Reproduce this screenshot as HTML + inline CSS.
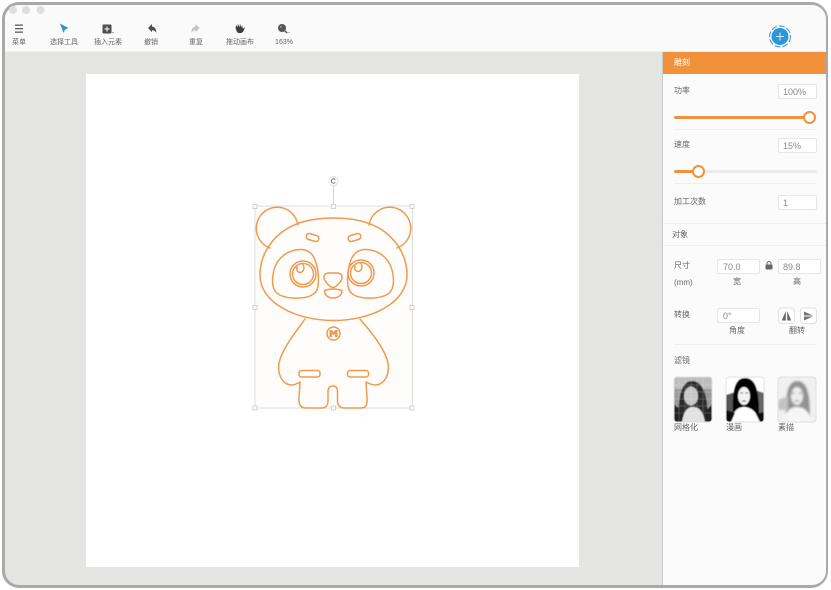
<!DOCTYPE html>
<html><head><meta charset="utf-8"><style>
*{box-sizing:border-box;margin:0;padding:0}
html,body{width:831px;height:590px;overflow:hidden;background:#fff}
body{font-family:"Liberation Sans","Noto Sans CJK SC",sans-serif;color:#555;position:relative}
#app{position:absolute;left:2px;top:2px;width:826px;height:586px;border:3px solid #a9a9a8;border-radius:17px;overflow:hidden;background:#e4e4e2}
.a{position:absolute}
.t{position:absolute;font-size:7px;line-height:10px;white-space:nowrap;text-align:center;color:#666;filter:blur(.3px)}
.l{position:absolute;font-size:8px;line-height:12px;white-space:nowrap;color:#666;filter:blur(.25px)}
.m{font-size:8px}
.in{position:absolute;background:#fff;border:1px solid #e6e6e6;border-radius:2px;height:15px;font-size:9px;line-height:14px;padding-left:4px;color:#888;filter:blur(.15px)}
.hr{position:absolute;height:1px;background:#efefef}
</style></head><body>
<div id="app"></div>
<svg class="a" style="left:0;top:0" width="831" height="590" viewBox="0 0 831 590">
<defs>
<clipPath id="fr"><rect x="5" y="5" width="821" height="580" rx="14"/></clipPath>
<clipPath id="c1"><rect x="674" y="377" width="38" height="45" rx="3"/></clipPath>
<clipPath id="c2"><rect x="726" y="377" width="38" height="45" rx="3"/></clipPath>
<clipPath id="c3"><rect x="778" y="377" width="38" height="45" rx="3"/></clipPath>
<filter id="b0"><feGaussianBlur stdDeviation=".25"/></filter>
<filter id="b1"><feGaussianBlur stdDeviation=".6"/></filter>
<filter id="b2"><feGaussianBlur stdDeviation="1"/></filter>
</defs>
<g clip-path="url(#fr)">
<rect x="0" y="0" width="831" height="52" fill="#fafafa"/>
<rect x="0" y="51.500" width="831" height="1" fill="#e8e8e8"/>
<rect x="86" y="74" width="493" height="493" fill="#fff"/>
<rect x="662" y="52" width="170" height="540" fill="#fbfbfb"/>
<rect x="662" y="52" width="1" height="540" fill="#c9c9c9"/>
<rect x="663" y="52" width="164" height="22" fill="#f2913c"/>
</g>
<!-- traffic -->
<circle cx="13" cy="10" r="4" fill="#dedede"/><circle cx="26" cy="10" r="4" fill="#dedede"/><circle cx="40.500" cy="10" r="4" fill="#dedede"/>
<!-- toolbar icons -->
<g fill="#5a5a5a" filter="url(#b0)">
<rect x="15" y="24.500" width="8" height="1.300"/><rect x="15" y="28" width="8" height="1.300"/><rect x="15" y="31.500" width="8" height="1.300"/>
<path d="M60 23.500 L68.500 28 L65 29.800 L63.500 33 Z" fill="#2e95d8"/>
<rect x="102.500" y="24.500" width="9" height="9" rx="1" fill="#4f4f4f"/>
<path d="M104.500 28.500h5v1h-5zM106.500 26.500h1v5h-1z" fill="#fff"/>
<circle cx="113" cy="32.500" r=".6"/>
<path d="M148 28 L152 24 V26.500 C154.800 26.800 156.300 29 156.300 32.800 C155.300 31 153.800 30.300 152 30.300 V32.300 Z" fill="#4f4f4f"/>
<path d="M199.500 28 L195.500 24 V26.500 C192.700 26.800 191.500 29 191.500 32.800 C192.500 31 193.800 30.300 195.500 30.300 V32.300 Z" fill="#c2c2c2"/>
<path d="M235.500 27.800 L236.500 25 L237.600 27.500 L237.900 23.800 L239.400 27.300 L240 23.800 L241.200 27.500 L242 25 L242.800 28.600 L245 27 L243.500 31 C242.500 33.600 237.500 33.800 236.800 31.500 Z" fill="#3e3e3e"/>
<circle cx="282" cy="28" r="4" fill="#555"/><circle cx="281" cy="27" r="1.200" fill="#8a8a8a"/><path d="M284.500 30.500l2.700 2.500" stroke="#555" stroke-width="1.500"/><circle cx="289" cy="32.500" r=".5"/>
</g>
<!-- add button -->
<circle cx="780" cy="36.500" r="10.500" fill="none" stroke="#2e95d8" stroke-width="1" stroke-dasharray="6 2"/>
<circle cx="780" cy="36.500" r="8.500" fill="#2e95d8"/>
<path d="M776 36.500h8M780 32.500v8" stroke="#d5ecfa" stroke-width="1"/>
<!-- selection -->
<rect x="255" y="206" width="157.500" height="202" fill="#fefdfc" stroke="#dedede" stroke-width="1"/>
<path d="M333.500 206V186" stroke="#d4d4d4"/>
<circle cx="333.500" cy="181" r="4.500" fill="#fff" stroke="#ddd"/>
<path d="M335.300 179.700a2.200 2.200 0 1 0 0 2.600" fill="none" stroke="#555" stroke-width=".8"/>
<g fill="#fff" stroke="#c9c9c9" stroke-width=".8">
<rect x="253" y="204.500" width="4" height="4"/><rect x="331.500" y="204.500" width="4" height="4"/><rect x="410" y="204.500" width="4" height="4"/>
<rect x="253" y="305.500" width="4" height="4"/><rect x="410" y="305.500" width="4" height="4"/>
<rect x="253" y="406" width="4" height="4"/><rect x="331.500" y="406" width="4" height="4"/><rect x="410" y="406" width="4" height="4"/>
</g>
<!-- panda -->
<g fill="none" stroke="#ef9a4e" stroke-width="1.500" stroke-linejoin="round" stroke-linecap="round" filter="url(#b0)">
<path d="M298 225 A21 21 0 1 0 270 248"/>
<path d="M369 225 A21 21 0 1 1 397 248"/>
<path d="M333.500 218 C312 218 294 223 282 232 C268 243 260 258 260 275 C260 303 296 320.500 333.500 320.500 C371 320.500 407 303 407 275 C407 258 399 243 385 232 C373 223 355 218 333.500 218Z"/>
<rect x="306" y="234.500" width="13" height="6" rx="3" transform="rotate(17 312.500 237.500)"/>
<rect x="348" y="234.500" width="13" height="6" rx="3" transform="rotate(-17 354.500 237.500)"/>
<path d="M302 249.500 C288 249 277 258 274 270 C272 278 272 286 275 291 C279 297 290 298.500 298 298 C308 298 317 295 318 286 C319 278 318 268 315 260 C313 254 308 250 302 249.500Z"/>
<path d="M364 249.500 C378 249 389 258 392 270 C394 278 394 286 391 291 C387 297 376 298.500 368 298 C358 298 349 295 348 286 C347 278 348 268 351 260 C353 254 358 250 364 249.500Z"/>
<circle cx="303" cy="274" r="13"/><circle cx="303" cy="274" r="10.500"/>
<circle cx="361" cy="273" r="13"/><circle cx="361" cy="273" r="10.500"/>
<path d="M297 267 C296 272 300 274 303 271 C304.500 269 304 266 303 264.500"/>
<path d="M355 266 C354 271 358 273 361 270 C362.500 268 362 265 361 263.500"/>
<path d="M329 273 H337 C341.500 273 343 276.500 341.500 279.500 C339.500 283.500 335.500 287.500 333 287.500 C330.500 287.500 326.500 283.500 324.500 279.500 C323 276.500 324.500 273 329 273Z"/>
<path d="M324.500 290.500 C330 288.500 336 288.500 342 290.500 C342 295 338 298 333 298 C328 298 324.500 295 324.500 290.500Z"/>
<path d="M305 319 C295 333 282 349 279 363 C277 375 283 385 292 385 C295 385 298 383 300 382 L299 398 C298.500 405 301 408 306 408 L322 408 C326 408 328 405 328 401 L328 391 C328 388 330 386 333 386 C336 386 337.500 388 337.500 391 L337.500 401 C337.500 405 340 408 344 408 L361 408 C366 408 367.500 405 367 398 L366 382 C368 383 371 385 375 385 C384 385 390 375 388 363 C385 349 372 333 360 319"/>
<circle cx="333.500" cy="333.500" r="6.500"/>
<rect x="299" y="370.500" width="21" height="6.500" rx="2.500"/>
<rect x="347.500" y="370.500" width="21" height="6.500" rx="2.500"/>
</g>
<path d="M329.500 330h2.500l1.500 2 1.500-2h2.500v7h-2.500v-3l-1.500 1-1.500-1v3h-2.500z" fill="#ef9a4c"/>
<!-- sliders -->
<rect x="674" y="116" width="136" height="3" rx="1.500" fill="#f2913c"/>
<circle cx="809.500" cy="117.500" r="5.500" fill="#fff" stroke="#f2913c" stroke-width="2"/>
<rect x="674" y="170" width="143" height="3" rx="1.500" fill="#ececec"/>
<rect x="674" y="170" width="24" height="3" rx="1.500" fill="#f2913c"/>
<circle cx="698.500" cy="171.500" r="5.500" fill="#fff" stroke="#f2913c" stroke-width="2"/>
<!-- lock -->
<rect x="765.500" y="264.500" width="7" height="5" rx="1" fill="#666"/>
<path d="M767 265v-1.500a2 2 0 0 1 4 0V265" fill="none" stroke="#666" stroke-width="1"/>
<!-- flip -->
<rect x="778.500" y="308" width="16" height="15.500" rx="3" fill="#fff" stroke="#e0e0e0"/>
<rect x="800.500" y="308" width="16" height="15.500" rx="3" fill="#fff" stroke="#e0e0e0"/>
<path d="M785.800 311v9.500h-4zM787.200 311v9.500h4z" fill="#666"/>
<path d="M804 311.500l9 4h-9zM804 316.500h9l-9 4z" fill="#777"/>
<!-- thumbnails -->
<g clip-path="url(#c1)"><g filter="url(#b1)">
<rect x="674" y="377" width="38" height="45" fill="#9a9a9a"/>
<rect x="674" y="377" width="38" height="12" fill="#bdbdbd"/>
<path d="M678 422 C678 398 681 381 692 381 C704 381 708 398 708 422Z" fill="#2b2b2b"/>
<ellipse cx="691" cy="396" rx="7" ry="9.500" fill="#c6c6c6"/>
<path d="M682 422 C684 410 688 407 693 407 C699 407 703 411 705 422Z" fill="#e2e2e2"/>
<path d="M674 422V404L683 412 681 422ZM712 422V404L705 412 707 422Z" fill="#222"/>
<path d="M679 377v45M685 377v45M691 377v45M697 377v45M703 377v45M674 385h38M674 392h38M674 399h38M674 406h38M674 413h38" stroke="#fff" stroke-width=".7" opacity=".25"/>
</g></g>
<g clip-path="url(#c2)"><g filter="url(#b1)">
<rect x="726" y="377" width="38" height="45" fill="#fff"/>
<path d="M726 395 L738 391 L738 414 H726Z" fill="#555"/>
<path d="M764 393 L752 389 L752 414 H764Z" fill="#666"/>
<path d="M733 414 C732 393 734 378 745 378 C757 378 759 394 759 414Z" fill="#050505"/>
<ellipse cx="744" cy="396" rx="6" ry="9" fill="#f2f2f2"/>
<path d="M740.500 393h2.500M745.500 393h2.500M742 401h4" stroke="#222" stroke-width="1"/>
<path d="M730 422 C733 411 738 407 744 407 C751 407 757 412 760 422Z" fill="#fff"/>
<path d="M726 422V410L735 413 731 422ZM764 422V412L756 414 760 422Z" fill="#0a0a0a"/>
</g></g>
<rect x="726" y="377" width="38" height="45" rx="3" fill="none" stroke="#e2e2e2"/>
<g clip-path="url(#c3)"><g filter="url(#b2)">
<rect x="778" y="377" width="38" height="45" fill="#f0f0f0"/>
<path d="M786 416 C785 394 788 381 797 381 C808 381 810 396 810 416Z" fill="#929292"/>
<ellipse cx="797" cy="396" rx="6" ry="9" fill="#ececec"/>
<path d="M778 400 L788 396 V410 H778Z" fill="#c2c2c2"/>
<path d="M783 422 C786 410 791 407 797 407 C804 407 809 411 812 422Z" fill="#f6f6f6"/>
<path d="M791.500 393h3M799 393h3M795 401h4" stroke="#666" stroke-width="1"/>
</g></g>
<rect x="778" y="377" width="38" height="45" rx="3" fill="none" stroke="#dedede"/>
<rect x="674" y="377" width="38" height="45" rx="3" fill="none" stroke="#dcdcdc"/>
</svg>

<div class="t" style="left:4px;width:30px;top:38px">菜单</div>
<div class="t" style="left:44px;width:40px;top:38px">选择工具</div>
<div class="t" style="left:87px;width:42px;top:38px">插入元素</div>
<div class="t" style="left:136px;width:30px;top:38px">撤销</div>
<div class="t" style="left:181px;width:30px;top:38px">重复</div>
<div class="t" style="left:219px;width:42px;top:38px">拖动画布</div>
<div class="t" style="left:269px;width:30px;top:38px">163%</div>

<div class="l" style="left:674px;top:57px;color:#fff">雕刻</div>
<div class="l" style="left:674px;top:85px">功率</div>
<div class="in" style="left:778px;top:84px;width:39px">100%</div>
<div class="hr" style="left:674px;top:129px;width:143px"></div>
<div class="l" style="left:674px;top:139px">速度</div>
<div class="in" style="left:778px;top:138px;width:39px">15%</div>
<div class="hr" style="left:674px;top:183px;width:143px"></div>
<div class="l" style="left:674px;top:196px">加工次数</div>
<div class="in" style="left:778px;top:195px;width:39px">1</div>
<div class="hr" style="left:663px;top:223px;width:163px"></div>
<div class="l" style="left:672px;top:229px">对象</div>
<div class="hr" style="left:663px;top:245px;width:163px"></div>
<div class="l" style="left:674px;top:260px">尺寸</div>
<div class="l" style="left:674px;top:277px">(mm)</div>
<div class="in" style="left:717px;top:259px;width:43px;padding-left:5px">70.0</div>
<div class="in" style="left:778px;top:259px;width:43px;padding-left:4px">89.8</div>
<div class="t m" style="left:717px;top:277px;width:40px">宽</div>
<div class="t m" style="left:778px;top:277px;width:38px">高</div>
<div class="l" style="left:674px;top:309px">转换</div>
<div class="in" style="left:717px;top:308px;width:43px;padding-left:5px">0°</div>
<div class="t m" style="left:717px;top:326px;width:40px">角度</div>
<div class="t m" style="left:778px;top:326px;width:38px">翻转</div>
<div class="hr" style="left:674px;top:344px;width:143px"></div>
<div class="l" style="left:674px;top:355px">滤镜</div>
<div class="l" style="left:674px;top:422px">网格化</div>
<div class="l" style="left:726px;top:422px">漫画</div>
<div class="l" style="left:778px;top:422px">素描</div>
</body></html>
